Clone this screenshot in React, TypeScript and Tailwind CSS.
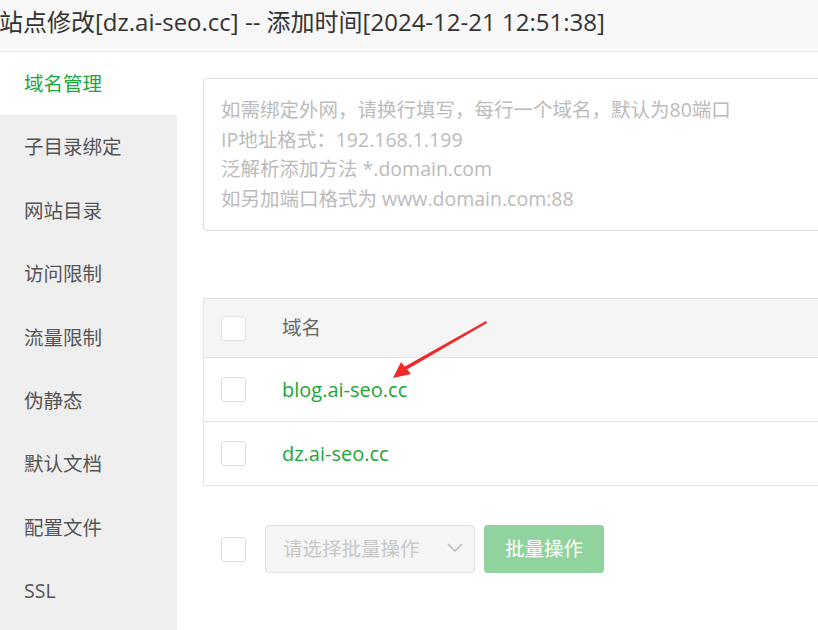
import React from "react";

const font = { fontFamily: '"Open Sans", "Noto Sans CJK SC", sans-serif' };

const menu = ["域名管理", "子目录绑定", "网站目录", "访问限制", "流量限制", "伪静态", "默认文档", "配置文件", "SSL"];

function Box() {
  return <div className="w-[25px] h-[25px] rounded-[3px] border border-[#dcdfe6] bg-white shrink-0" />;
}

export default function App() {
  return (
    <div className="w-[818px] h-[630px] overflow-hidden bg-white relative" style={font}>
      <div className="h-[52px] bg-[#f8f8f8] border-b border-[#eaeaea] flex items-center pb-[7px]">
        <span className="text-[24px] text-[#333] whitespace-nowrap -ml-[1px]">站点修改[dz.ai-seo.cc] -- 添加时间[2024-12-21 12:51:38]</span>
      </div>
      <div className="flex h-[578px]">
        <div className="w-[177px] shrink-0 bg-[#efefef] flex flex-col">
          {menu.map((m, i) => (
            <div
              key={m}
              className={
                "h-[63.4px] flex items-center pl-[24px] text-[19.5px] shrink-0 " +
                (i === 0 ? "bg-white text-[#20a53a]" : "text-[#555]")
              }
            >
              {m}
            </div>
          ))}
        </div>
        <div className="flex-1 pl-[26px] pt-[26px] flex flex-col min-w-0">
          <div className="w-[700px] h-[153px] border border-[#dcdfe6] rounded-[4px] pl-[17px] pt-[16px] text-[19.5px] leading-[29.5px] text-[#bbbbbb]">
            <div>如需绑定外网，请换行填写，每行一个域名，默认为80端口</div>
            <div>IP地址格式：192.168.1.199</div>
            <div>泛解析添加方法 *.domain.com</div>
            <div>如另加端口格式为 www.domain.com:88</div>
          </div>
          <div className="mt-[67px] w-[700px] border border-[#e4e4e4]">
            <div className="h-[59px] bg-[#f5f5f5] flex items-center pl-[17px] border-b border-[#e4e4e4]">
              <Box />
              <span className="ml-[36px] text-[19.5px] text-[#666]">域名</span>
            </div>
            <div className="h-[64px] flex items-center pl-[17px] border-b border-[#e4e4e4]">
              <Box />
              <span className="ml-[36px] text-[20px] text-[#20a53a]">blog.ai-seo.cc</span>
            </div>
            <div className="h-[63px] flex items-center pl-[17px]">
              <Box />
              <span className="ml-[36px] text-[20px] text-[#20a53a]">dz.ai-seo.cc</span>
            </div>
          </div>
          <div className="mt-[39px] flex items-center pl-[18px]">
            <Box />
            <div className="ml-[19px] w-[210px] h-[48px] rounded-[4px] border border-[#dcdfe6] bg-[#f5f5f5] flex items-center justify-between pl-[17px] pr-[10px]">
              <span className="text-[19.5px] text-[#c8c8c8]">请选择批量操作</span>
              <svg width="18" height="18" viewBox="0 0 18 18" fill="none" className="-mt-[4px]">
                <path d="M2 6l7 7 7-7" stroke="#bbb" strokeWidth="1.5" />
              </svg>
            </div>
            <button className="ml-[9px] w-[120px] h-[48px] rounded-[4px] bg-[#90d39e] text-white text-[19.5px]">批量操作</button>
          </div>
        </div>
      </div>
      <svg className="absolute left-0 top-0 pointer-events-none" width="818" height="630">
        <polygon points="486,321 487,323 406,370 404,367" fill="#f02a2a" />
        <polygon points="393,378 401,362 411,374" fill="#f02a2a" />
      </svg>
    </div>
  );
}
